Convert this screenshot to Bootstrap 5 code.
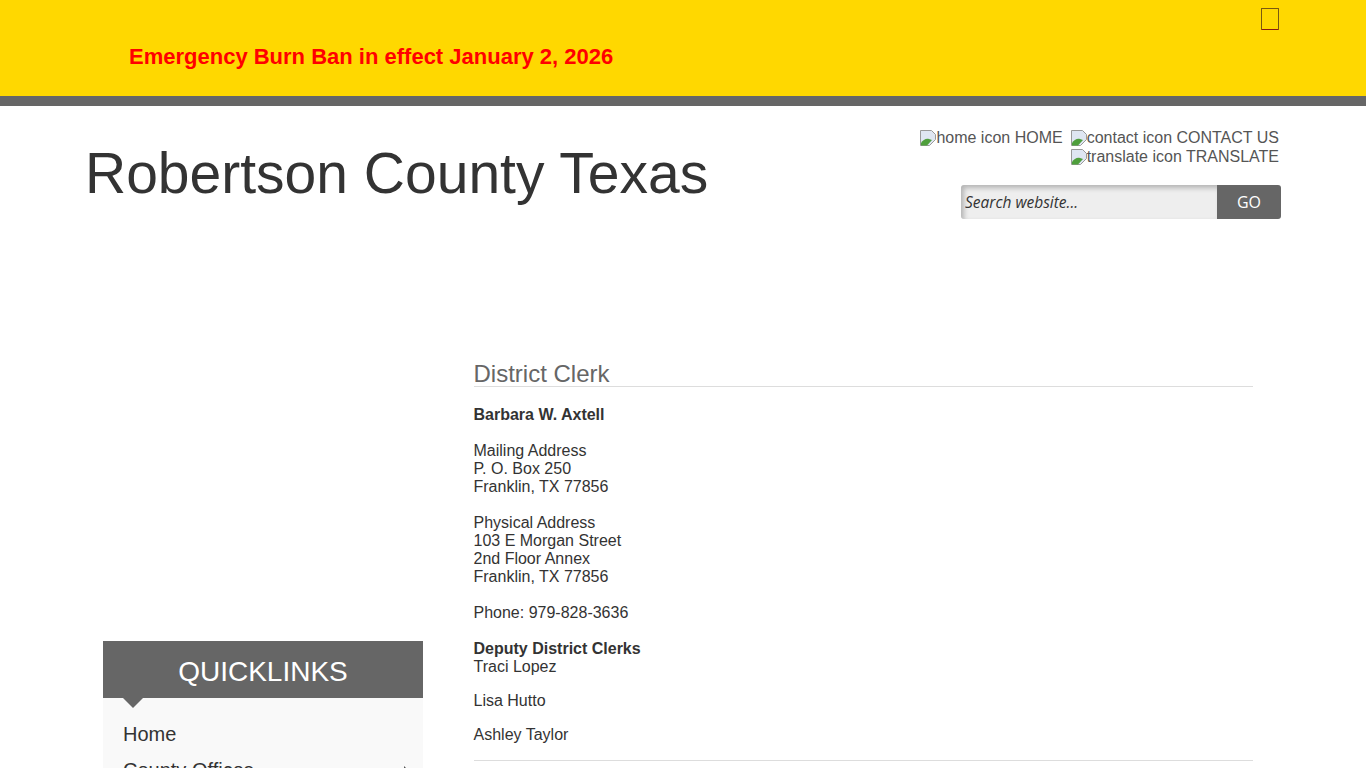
<!DOCTYPE html>
<html lang="en">
<head>
  <meta charset="UTF-8">
  <title>District Clerk - Robertson County Texas</title>
  <link href="https://cdn.jsdelivr.net/npm/bootstrap@5.3.0/dist/css/bootstrap.min.css" rel="stylesheet">
  <style>
    html, body { height: 768px; overflow: hidden; }
    body { font-family: "Liberation Sans", Arial, sans-serif; font-size: 16px; line-height: 18px; color: #333; background: #fff; }
    a { color: inherit; text-decoration: none; }
    .alert-strip { height: 106px; background: #ffd800; border-bottom: 10px solid #666; padding: 44px 129px 0; position: relative; }
    .alert-strip p { margin: 0; font-size: 22px; line-height: 25px; font-weight: 700; color: #f00; }
    .menu-glyph { position: absolute; left: 1261px; top: 8px; width: 18px; height: 22px; border: 1px solid #7a5a10; border-bottom-color: #8a1c10; border-radius: 1px; }
    .site-head { height: 255px; padding: 22px 87px 0 85px; }
    .site-title { font-size: 57px; line-height: 64px; margin: 13px 0 0; font-weight: 400; color: #333; }
    .top-links { width: 360px; margin-left: auto; color: #555; text-align: right; line-height: 19px; }
    .top-links .pair { display: flex; justify-content: flex-end; gap: 8px; }
    .broken { width: 16px; height: 16px; vertical-align: -3px; }
    .search-box { width: 320px; height: 34px; margin: 19px -2px 0 auto; border-radius: 3px; overflow: hidden; }
    .search-box input { flex: 1; min-width: 0; border: 0; background: #eee; box-shadow: inset 3px 3px 5px #b5b5b5; padding: 0 4px; font: italic 15.5px "Open Sans", sans-serif; color: #333; outline: 0; }
    .search-box input::placeholder { color: #333; opacity: 1; }
    .search-box button { width: 64px; border: 0; background: #666; color: #fff; font: 16px "Open Sans", sans-serif; padding: 0; }
    .page-body { padding: 0 113px 0 103px; }
    .side-col { width: 320px; flex: none; padding-top: 280px; }
    .quick-head { height: 57px; background: #666; color: #fff; font-size: 28px; line-height: 62px; text-align: center; position: relative; }
    .quick-head::after { content: ""; position: absolute; left: 20px; top: 57px; border: 10px solid transparent; border-bottom: 0; border-top-color: #666; }
    .quick-list { background: #f9f9f9; padding: 24px 20px 0; font-size: 20px; line-height: 24px; color: #333; }
    .quick-list div { height: 36px; display: flex; justify-content: space-between; }
    .quick-arrow { width: 0; height: 0; margin: 8px -6px 0 0; border: 5px solid transparent; border-right: 0; border-left-color: #555; }
    .main-col { width: 779.5px; margin-left: 50.5px; }
    .page-name { font-size: 24px; line-height: 26px; font-weight: 400; color: #666; border-bottom: 1px solid #ddd; margin: 0 0 19px; height: 26px; }
    .main-col p { margin: 0 0 18px; }
    .staff { margin-bottom: 16px !important; }
    .end-rule { border-top: 1px solid #ddd; margin: 0; opacity: 1; }
  </style>
</head>
<body>

<div class="alert-strip">
  <p>Emergency Burn Ban in effect January 2, 2026</p>
  <span class="menu-glyph"></span>
</div>

<div class="site-head d-flex justify-content-between">
  <h1 class="site-title">Robertson County Texas</h1>
  <div>
    <div class="top-links">
      <div class="pair">
        <a href="#"><svg class="broken" viewBox="0 0 16 16"><path d="M.5 15.5V.5h11l4 4v5l-6 6z" fill="#dfe6f2" stroke="#999"/><path d="M1 15.5V13c2-3 5-5 8-4l3 1-5 5.500z" fill="#4f9f3c"/></svg>home icon HOME</a>
        <a href="#"><svg class="broken" viewBox="0 0 16 16"><path d="M.5 15.5V.5h11l4 4v5l-6 6z" fill="#dfe6f2" stroke="#999"/><path d="M1 15.5V13c2-3 5-5 8-4l3 1-5 5.500z" fill="#4f9f3c"/></svg>contact icon CONTACT US</a>
      </div>
      <a href="#"><svg class="broken" viewBox="0 0 16 16"><path d="M.5 15.5V.5h11l4 4v5l-6 6z" fill="#dfe6f2" stroke="#999"/><path d="M1 15.5V13c2-3 5-5 8-4l3 1-5 5.500z" fill="#4f9f3c"/></svg>translate icon TRANSLATE</a>
    </div>
    <form class="search-box d-flex" onsubmit="return false">
      <input type="text" placeholder="Search website...">
      <button type="submit">GO</button>
    </form>
  </div>
</div>

<div class="page-body d-flex">
  <div class="side-col">
    <div class="quick-head">QUICKLINKS</div>
    <div class="quick-list">
      <div><a href="#">Home</a></div>
      <div><a href="#">County Offices</a><span class="quick-arrow"></span></div>
    </div>
  </div>
  <div class="main-col">
    <h2 class="page-name">District Clerk</h2>
    <p><strong>Barbara W. Axtell</strong></p>
    <p>Mailing Address<br>P. O. Box 250<br>Franklin, TX 77856</p>
    <p>Physical Address<br>103 E Morgan Street<br>2nd Floor Annex<br>Franklin, TX 77856</p>
    <p>Phone: 979-828-3636</p>
    <p class="staff"><strong>Deputy District Clerks</strong><br>Traci Lopez</p>
    <p class="staff">Lisa Hutto</p>
    <p class="staff">Ashley Taylor</p>
    <hr class="end-rule">
  </div>
</div>

<script src="https://cdn.jsdelivr.net/npm/bootstrap@5.3.0/dist/js/bootstrap.bundle.min.js"></script>
</body>
</html>
